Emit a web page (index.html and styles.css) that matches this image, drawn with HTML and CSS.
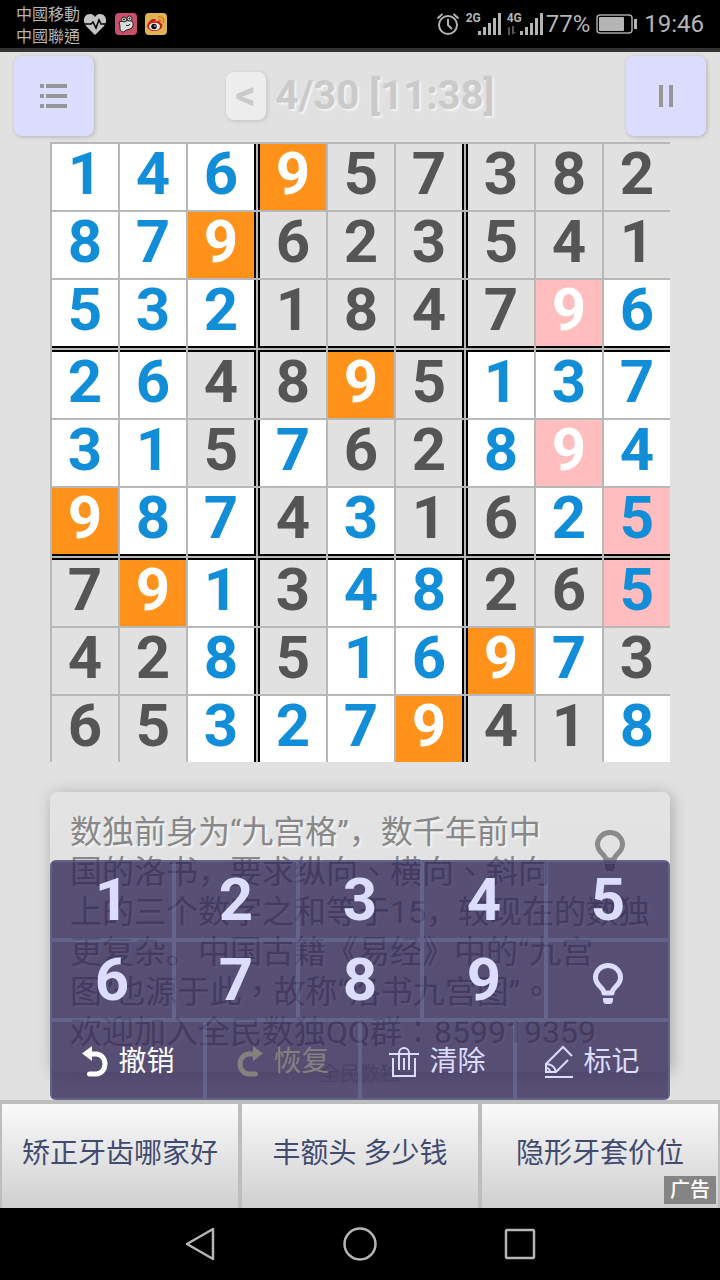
FILE: index.html
```html
<!DOCTYPE html>
<html lang="zh-CN">
<head>
<meta charset="utf-8">
<meta name="viewport" content="width=device-width, initial-scale=1">
<title>全民数独</title>
<link rel="stylesheet" href="styles.css">
</head>
<body>
<header class="status">
  <div class="carriers" lang="zh-TW"><span>中國移動</span><span>中國聯通</span></div>
  <div class="notices">
    <svg width="24" height="24" viewBox="0 0 24 24" aria-hidden="true"><path fill="#c4c4c4" d="M12 23L3 14C-1 9 1 2 7 2c3 0 4 1.500 5 3c1-1.500 2-3 5-3c6 0 8 7 4 12z"/><path fill="none" stroke="#000" stroke-width="1.600" d="M0 12h8l2-2 3 6 3-8 2 4h6"/></svg>
    <svg width="22" height="22" viewBox="0 0 22 22" aria-hidden="true"><rect width="22" height="22" rx="4" fill="#c8506a"/><path fill="#ddd" stroke="#222" stroke-width="1" d="M4 9C7 8 14 7 17 8c2 3 1 7-2 8c-3 1-5 1-6 3c-2 0-4-1-4-3c0-2 0-4-1-7z"/><circle cx="9" cy="6.500" r="2.500" fill="#ddd" stroke="#222"/><circle cx="14.500" cy="5.500" r="2.500" fill="#ddd" stroke="#222"/><circle cx="9" cy="6.500" r="1" fill="#222"/><circle cx="14.500" cy="5.500" r="1" fill="#222"/><path d="M11 12c1 1 3 1 4-1" fill="none" stroke="#222"/></svg>
    <svg width="22" height="22" viewBox="0 0 22 22" aria-hidden="true"><rect width="22" height="22" rx="4" fill="#dcb454"/><path fill="#c81e1e" d="M2 13C3 9 7 5 10 6c1 0 1 2 0 3c3-2 6-1 5 1c2 0 3 2 2 4c-2 5-14 6-15-1z"/><ellipse cx="9.500" cy="13.500" rx="5.500" ry="3.800" fill="#eee"/><circle cx="9" cy="13.500" r="2.800" fill="#111"/><circle cx="10" cy="13" r=".8" fill="#eee"/><path d="M13 4c4-1 7 2 5 6M13 7c2-1 3 1 2.500 2" fill="none" stroke="#e07818" stroke-width="1.500"/></svg>
  </div>
  <div class="system">
    <svg width="24" height="24" viewBox="0 0 24 24" fill="none" stroke="#b5b5b5" stroke-width="2" aria-hidden="true"><circle cx="12" cy="13" r="9"/><path d="M12 7v6l4 4M1.500 6.500l5-4.500M22.500 6.500l-5-4.500"/></svg>
    <span class="signal"><small>2G</small><svg width="24" height="24" viewBox="0 0 24 24" fill="#b5b5b5" aria-hidden="true"><path d="M1 19h3v4H1zM6 15h3v8H6zM11 11h3v12h-3zM16 6h3v17h-3zM21 1h3v22h-3z"/></svg></span>
    <span class="signal"><small>4G</small><svg width="36" height="24" viewBox="0 0 36 24" fill="#b5b5b5" aria-hidden="true"><path fill="#555" d="M0 17l3-3v9H1v-6zM5 14h2v6h2l-4 3z"/><path d="M13 19h3v4h-3zM18 15h3v8h-3zM23 11h3v12h-3zM28 6h3v17h-3zM33 1h3v22h-3z"/></svg></span>
    <span class="percent">77%</span>
    <svg class="battery" width="42" height="22" viewBox="0 0 42 22" aria-hidden="true"><rect x="1" y="2" width="35" height="18" rx="3" fill="none" stroke="#a8a8a8" stroke-width="1.500"/><rect x="3" y="4" width="25" height="14" rx="1" fill="#b5b5b5"/><path fill="#b5b5b5" d="M38 6h3v10h-3z"/></svg>
    <time>19:46</time>
  </div>
</header>

<main>
  <div class="toolbar">
    <button class="tool" aria-label="菜单"><svg width="28" height="26" viewBox="0 0 28 26" fill="#969696" aria-hidden="true"><path d="M0 1h4v4H0zM6 1h21v4H6zM0 11h4v4H0zM6 11h21v4H6zM0 21h4v4H0zM6 21h21v4H6z"/></svg></button>
    <div class="heading"><button class="back" aria-label="上一关">&lt;</button><h1>4/30 [11:38]</h1></div>
    <button class="tool" aria-label="暂停"><svg width="14" height="22" viewBox="0 0 14 22" fill="#969696" aria-hidden="true"><path d="M0 0h4v22H0zM10 0h4v22h-4z"/></svg></button>
  </div>

  <div class="board">
    <button class="u">1</button><button class="u">4</button><button class="u">6</button><button class="hit">9</button><button>5</button><button>7</button><button>3</button><button>8</button><button>2</button>
    <button class="u">8</button><button class="u">7</button><button class="hit">9</button><button>6</button><button>2</button><button>3</button><button>5</button><button>4</button><button>1</button>
    <button class="u">5</button><button class="u">3</button><button class="u">2</button><button>1</button><button>8</button><button>4</button><button>7</button><button class="hit bad">9</button><button class="u">6</button>
    <button class="u">2</button><button class="u">6</button><button>4</button><button>8</button><button class="hit">9</button><button>5</button><button class="u">1</button><button class="u">3</button><button class="u">7</button>
    <button class="u">3</button><button class="u">1</button><button>5</button><button class="u">7</button><button>6</button><button>2</button><button class="u">8</button><button class="hit bad">9</button><button class="u">4</button>
    <button class="hit">9</button><button class="u">8</button><button class="u">7</button><button>4</button><button class="u">3</button><button>1</button><button>6</button><button class="u">2</button><button class="u bad">5</button>
    <button>7</button><button class="hit">9</button><button class="u">1</button><button>3</button><button class="u">4</button><button class="u">8</button><button>2</button><button>6</button><button class="u bad">5</button>
    <button>4</button><button>2</button><button class="u">8</button><button>5</button><button class="u">1</button><button class="u">6</button><button class="hit">9</button><button class="u">7</button><button>3</button>
    <button>6</button><button>5</button><button class="u">3</button><button class="u">2</button><button class="u">7</button><button class="hit">9</button><button>4</button><button>1</button><button class="u">8</button>
  </div>

  <section class="play">
    <div class="card">
      <svg class="tip" width="40" height="42" viewBox="0 0 40 42" aria-hidden="true"><path fill="none" stroke="#8a8a8a" stroke-width="5" stroke-linejoin="round" d="M16 30C16 24 7.500 23 7.500 14.500a12.500 12 0 0 1 25 0c0 8.500-8.500 9.500-8.500 15.500z"/><path fill="#8a8a8a" d="M15 34h10v3c0 2-1 4-3 4h-4c-2 0-3-2-3-4z"/></svg>
      <p>数独前身为“九宫格”，数千年前中<br>国的洛书，要求纵向<span lang="zh-TW">、</span>横向<span lang="zh-TW">、</span>斜向<br>上的三个数字之和等于15，较现在的数独<br>更复杂。中国古籍《易经》中的“九宫<br>图”也源于此<span lang="zh-TW">，</span>故称“洛书九宫图”<span lang="zh-TW">。</span><br>欢迎加入全民数独QQ群<span lang="zh-TW">：</span>859919359</p>
    </div>
    <div class="brand">全民数独</div>
    <div class="pad">
      <div class="keys">
        <button>1</button><button>2</button><button>3</button><button>4</button><button>5</button>
        <button>6</button><button>7</button><button>8</button><button>9</button>
        <button aria-label="提示"><svg width="40" height="42" viewBox="0 0 40 42" aria-hidden="true"><path fill="none" stroke="#dcdcff" stroke-width="5" stroke-linejoin="round" d="M16 30C16 24 7.500 23 7.500 14.500a12.500 12 0 0 1 25 0c0 8.500-8.500 9.500-8.500 15.500z"/><path fill="#dcdcff" d="M15 35h10v2c0 2-1 4-3 4h-4c-2 0-3-2-3-4z"/></svg></button>
      </div>
      <div class="actions">
        <button class="undo"><svg width="28" height="32" viewBox="0 0 28 32" aria-hidden="true"><path fill="none" stroke="currentColor" stroke-width="5" stroke-linecap="round" d="M10 8h6a9 10 0 0 1 0 20H9.500"/><path fill="currentColor" d="M2 7.500L12 0v15z"/></svg>撤销</button>
        <button disabled><svg width="28" height="32" viewBox="0 0 28 32" aria-hidden="true"><path fill="none" stroke="currentColor" stroke-width="5" stroke-linecap="round" d="M20 8h-6a9 10 0 0 0 0 20h6.500"/><path fill="currentColor" d="M28 7.500L18 0v15z"/></svg>恢复</button>
        <button><svg width="30" height="32" viewBox="0 0 30 32" fill="none" stroke="currentColor" stroke-width="2" aria-hidden="true"><path d="M0 8h30M4 12v18h22V12M10 24V7a5 5 0 0 1 10 0v17M15 12v12"/></svg>清除</button>
        <button><svg width="28" height="34" viewBox="0 0 28 34" fill="none" stroke="currentColor" stroke-width="2" aria-hidden="true"><path d="M0 32h28M27 11L18 2L1 19v8h10L23 15M1 19c5 0 9 3 10 8M5 27a4 4 0 0 0-4-4"/></svg>标记</button>
      </div>
    </div>
  </section>
</main>

<aside class="ads">
  <a href="#">矫正牙齿哪家好</a><a href="#">丰额头 多少钱</a><a href="#">隐形牙套价位</a>
  <span class="mark">广告</span>
</aside>

<nav class="system-nav">
  <button aria-label="返回"><svg width="36" height="36" viewBox="0 0 36 36"><path d="M5 18L31 3v30z"/></svg></button>
  <button aria-label="主屏幕"><svg width="36" height="36" viewBox="0 0 36 36"><circle cx="18" cy="18" r="15.500"/></svg></button>
  <button aria-label="最近任务"><svg width="36" height="36" viewBox="0 0 36 36"><rect x="4" y="4" width="28" height="28" rx="1"/></svg></button>
</nav>
</body>
</html>
```

FILE: styles.css
```css
* { box-sizing: border-box; }

body {
  margin: 0;
  min-height: 100vh;
  display: flex;
  flex-direction: column;
  background: #e1e1e1;
  font-family: Roboto, "Noto Sans CJK SC", sans-serif;
}

button {
  margin: 0;
  padding: 0;
  border: 0;
  background: none;
  color: inherit;
  font: inherit;
  display: flex;
  align-items: center;
  justify-content: center;
}

svg { display: block; flex: none; }

[lang="zh-TW"] { font-family: "Noto Sans CJK TC", sans-serif; }

/* phone status bar */
.status {
  height: 52px;
  padding: 0 16px;
  display: flex;
  align-items: center;
  background: #000;
  border-bottom: 4px solid #333;
  color: #b5b5b5;
}
.carriers {
  display: flex;
  flex-direction: column;
  font-size: 16px;
  line-height: 22px;
}
.notices { display: flex; align-items: center; gap: 8px; margin-left: 3px; }
.system {
  display: flex;
  align-items: center;
  gap: 6px;
  margin-left: auto;
  font-size: 24px;
  line-height: 28px;
}
.signal { position: relative; padding-left: 11px; }
.signal + .signal { padding-left: 0; }
.signal small {
  position: absolute;
  top: 0;
  left: 0;
  font-size: 12px;
  line-height: 12px;
  font-weight: 700;
}
.percent { margin-left: -3px; }

/* level title and tools */
.toolbar {
  height: 90px;
  padding: 4px 14px 6px;
  display: flex;
  align-items: center;
  justify-content: space-between;
}
.tool {
  width: 80px;
  height: 80px;
  border-radius: 8px;
  background: #dcdcff;
  box-shadow: 1px 1px 4px rgba(0, 0, 0, .2);
}
.heading {
  display: flex;
  align-items: center;
  gap: 10px;
  color: #cacaca;
  font-size: 40px;
  font-weight: 700;
  line-height: 50px;
}
.heading h1 {
  margin: 0;
  font-size: 40px;
  text-shadow: 2px 2px 2px #f4f4f4;
}
.back {
  width: 40px;
  height: 48px;
  border-radius: 8px;
  background: #ededed;
  box-shadow: 1px 1px 4px rgba(0, 0, 0, .15);
}

/* sudoku board */
.board {
  margin: 0 50px;
  padding: 2px 0 0 2px;
  aspect-ratio: 1;
  display: grid;
  grid-template-columns: 33fr 33fr 34fr 34fr 33fr 34fr 34fr 33fr 33fr;
  grid-template-rows: 33fr 33fr 34fr 34fr 33fr 34fr 34fr 33fr 33fr;
  gap: 2px;
  background: #b8b8b8;
}
.board button {
  padding-bottom: 6px;
  border: 0 solid #000;
  background: #e1e1e1;
  color: #555;
  font-size: 60px;
  font-weight: 700;
  line-height: 56px;
  min-width: 0;
  min-height: 0;
}
.board .u { background: #fff; color: #128dd8; }
.board .hit { background: #ff921b; color: #fff; }
.board .bad { background: #ffbdbd; }
.board button:nth-child(9n+3),
.board button:nth-child(9n+6) { border-right-width: 2px; }
.board button:nth-child(9n+4),
.board button:nth-child(9n+7) { border-left-width: 2px; }
.board button:nth-child(n+19):nth-child(-n+27),
.board button:nth-child(n+46):nth-child(-n+54) { border-bottom-width: 2px; }
.board button:nth-child(n+28):nth-child(-n+36),
.board button:nth-child(n+55):nth-child(-n+63) { border-top-width: 2px; }

/* story card with the keypad over it */
.play {
  position: relative;
  margin: 30px 50px 0;
  padding-bottom: 28px;
}
.card {
  padding: 20px;
  border-radius: 8px;
  background: linear-gradient(#e3e3e3, #dedede);
  box-shadow: 2px 2px 16px rgba(0, 0, 0, .25);
  color: #888;
  font-size: 32px;
  line-height: 40px;
  text-shadow: 2px 2px 2px #f4f4f4;
}
.card p { margin: 0; white-space: nowrap; }
.card span { line-height: 24px; }
.card .tip { float: right; margin: 18px 20px 0 0; }
.brand {
  position: absolute;
  right: 0;
  bottom: 14px;
  left: 0;
  color: #aaa;
  font-size: 20px;
  line-height: 24px;
  text-align: center;
}
.pad {
  position: absolute;
  right: 0;
  bottom: 0;
  left: 0;
  overflow: hidden;
  border-radius: 6px;
  background: rgba(47, 37, 85, .78);
  color: #dcdcff;
}
.keys { display: grid; grid-template-columns: repeat(5, 1fr); }
.actions { display: grid; grid-template-columns: repeat(4, 1fr); }
.keys button,
.actions button {
  height: 80px;
  border: 2px solid rgba(130, 150, 195, .3);
}
.keys button {
  font-size: 60px;
  font-weight: 700;
  line-height: 72px;
}
.keys svg { margin-top: 8px; }
.actions button {
  padding-top: 4px;
  gap: 10px;
  font-size: 28px;
  line-height: 40px;
}
.actions .undo { color: #fff; }
.actions button:disabled { color: #85817f; }

/* sponsored links */
.ads {
  position: relative;
  display: grid;
  grid-template-columns: repeat(3, 1fr);
  border-top: 4px solid #bdbdbd;
}
.ads a {
  height: 104px;
  padding-bottom: 4px;
  display: flex;
  align-items: center;
  justify-content: center;
  border: 0 solid #bdbdbd;
  border-width: 0 2px;
  background: linear-gradient(#fafafa, #cfcfcf);
  color: #414b70;
  font-size: 28px;
  line-height: 40px;
  text-decoration: none;
}
.mark {
  position: absolute;
  right: 4px;
  bottom: 4px;
  padding: 0 6px;
  background: #848484;
  color: #fff;
  font-size: 20px;
  font-weight: 500;
  line-height: 28px;
}

/* phone navigation keys */
.system-nav {
  flex: 1;
  min-height: 72px;
  display: flex;
  justify-content: center;
  background: #000;
}
.system-nav button { width: 160px; }
.system-nav svg {
  fill: none;
  stroke: #b5b5b5;
  stroke-width: 2.5;
  stroke-linejoin: round;
}
```
